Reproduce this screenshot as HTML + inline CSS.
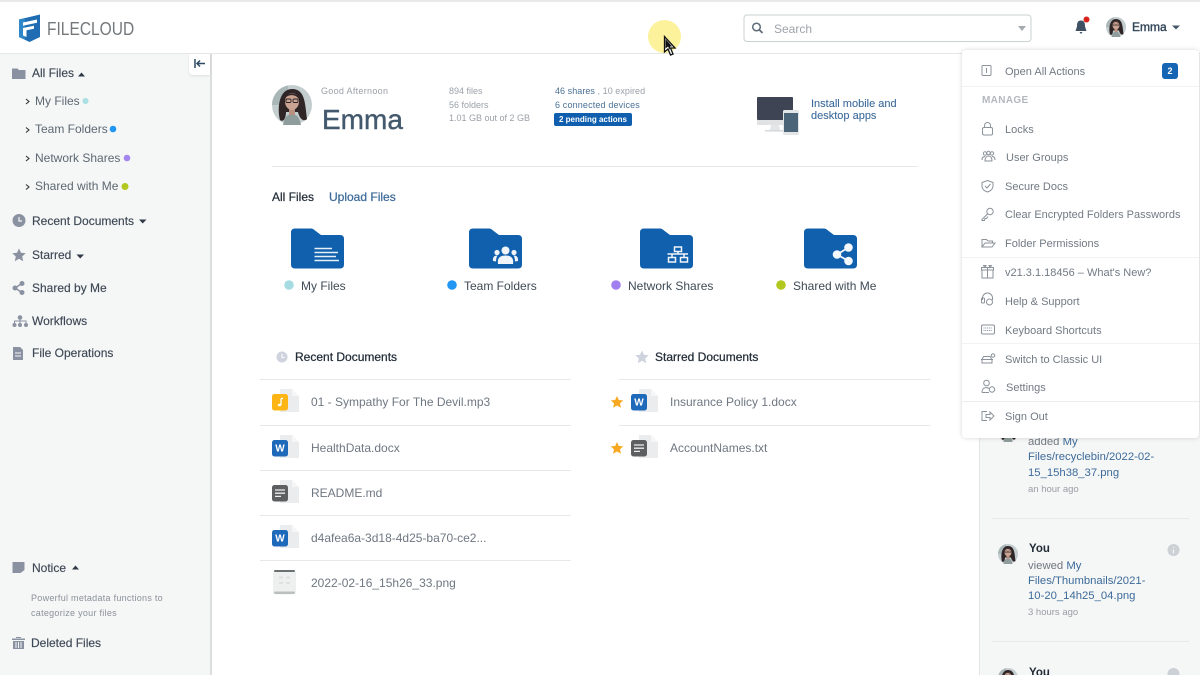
<!DOCTYPE html>
<html><head><meta charset="utf-8"><title>FileCloud</title>
<style>
html,body{margin:0;padding:0;width:1200px;height:675px;overflow:hidden;background:#fff}
body{position:relative;font-family:"Liberation Sans",sans-serif;filter:blur(.35px)}
.a{position:absolute}
.t{position:absolute;white-space:nowrap;line-height:16px;height:16px;font-size:12px}
.s{color:#3d4855;-webkit-text-stroke:.15px #3d4855}
.n{color:#5d6873}
.f{color:#6f7782}
.m{color:#727a84;font-size:11px}
.h{color:#232d38;-webkit-text-stroke:.25px #232d38}
.g{color:#9ba1a8;font-size:9px}
.b{color:#4b7095;font-size:9px;letter-spacing:.15px}
.l{color:#3d6b9a}
.c{color:#3f4b56}
.p{font-size:11.300px;color:#707881}
.hr{position:absolute;height:1px;background:#e6e8e9}
svg{position:absolute;left:0;top:0;overflow:visible}
</style></head><body>

<div class="a" style="left:0;top:0;width:1200px;height:2px;background:#e9e9e9"></div>
<div class="a" style="left:0;top:53px;width:1200px;height:1px;background:#e5e7e8"></div>
<div class="a" style="left:0;top:54px;width:210px;height:621px;background:#f5f6f6"></div>
<div class="a" style="left:210px;top:54px;width:1.5px;height:621px;background:#dcdedd"></div>
<div class="a" style="left:189px;top:54px;width:21px;height:21px;background:#fff;border-radius:0 0 0 4px;box-shadow:0 1px 2px rgba(0,0,0,.1)"></div>
<div class="a" style="left:979px;top:54px;width:221px;height:621px;background:#f5f6f6;border-left:1px solid #e3e5e5"></div>
<div class="hr" style="left:272px;top:166px;width:646px"></div>
<div class="hr" style="left:260px;top:379px;width:311px"></div>
<div class="hr" style="left:260px;top:425px;width:311px"></div>
<div class="hr" style="left:260px;top:470px;width:311px"></div>
<div class="hr" style="left:260px;top:515px;width:311px"></div>
<div class="hr" style="left:260px;top:560px;width:311px"></div>
<div class="hr" style="left:619px;top:379px;width:311px"></div>
<div class="hr" style="left:619px;top:425px;width:311px"></div>
<div class="hr" style="left:992px;top:518px;width:197px"></div>
<div class="hr" style="left:992px;top:641px;width:197px"></div>

<svg width="1200" height="675" viewBox="0 0 1200 675">
<defs>
<symbol id="folder" overflow="visible"><path d="M4 0H20Q22 0 24 2L30 6.500H49Q53 6.500 53 10.500V36Q53 40 49 40H4Q0 40 0 36V4Q0 0 4 0Z" fill="#1060ae"/></symbol>
<symbol id="av" overflow="visible" viewBox="-20 -20 40 40">
<circle r="20" fill="#c3cdce"/><path d="M-20 0A20 20 0 0 1-4-19.600L-4 0Z" fill="#aab7b8"/>
<path d="M-12 15C-15 3-13-16 0-16S13-2 15 14C11 18 7 12 6 7H-6C-6 12-8 18-12 15Z" fill="#2f2527"/>
<path d="M-9 20Q-7 9 0 9T9 20Z" fill="#8f9c9c"/>
<rect x="-3" y="3" width="6" height="7" fill="#b98f7f"/>
<ellipse cx="0" cy="-3.500" rx="7" ry="8.500" fill="#cba392"/>
<path d="M-7.500-5C-6-11 4-12 7.500-5 6-13-5-15-7.500-5Z" fill="#2f2527"/>
<rect x="-6" y="-6" width="5" height="3.500" rx="1" fill="none" stroke="#2a2325" stroke-width=".9"/>
<rect x="1" y="-6" width="5" height="3.500" rx="1" fill="none" stroke="#2a2325" stroke-width=".9"/>
</symbol>
<symbol id="doc" overflow="visible"><path d="M0 0H12L19 7V23H0Z" fill="#ebeced"/><path d="M12 0L19 7H12Z" fill="#f6f6f6"/></symbol>
<symbol id="word" overflow="visible"><use href="#doc" x="8" y="-5"/><rect width="16" height="16.500" rx="2.500" fill="#1f69bb"/><text x="8" y="11.500" font-family="Liberation Sans" font-size="10" font-weight="700" fill="#fff" text-anchor="middle">W</text></symbol>
<symbol id="txt" overflow="visible"><use href="#doc" x="8" y="-5"/><rect width="16" height="16.500" rx="2.500" fill="#5e5f60"/><path d="M3 5H13M3 8.200H13M3 11.400H9" stroke="#eee" stroke-width="1.300"/></symbol>
<symbol id="star" overflow="visible" viewBox="-7 -7 14 14"><path d="M0-6.500L2-2.200 6.700-1.700 3.200 1.500 4.200 6.200 0 3.800-4.200 6.200-3.200 1.500-6.700-1.700-2-2.200Z"/></symbol>
</defs>

<!-- logo -->
<path d="M19 19.500L40 14.500V37L29.500 42 19 37Z" fill="#1f6cb3"/>
<path d="M19 19.500L25 18V39.500L19 37Z" fill="#2f86c8"/>
<path d="M23 22.500L37 19.500V22.800L23 25.800ZM23 28L34 25.700V28.700L26.500 30.300V37L23 35.500Z" fill="#fff"/>

<!-- collapse -->
<path d="M195 59V68M205 63.500H197.500M200 60.500L197 63.500 200 66.500" fill="none" stroke="#2e4a63" stroke-width="1.500"/>
<!-- sidebar icons -->
<g fill="#8a91a1">
<path d="M12 68.500H17.500L19 70H25.500V79H12Z"/>
<circle cx="19" cy="220.500" r="6.500"/>
<use href="#star" x="12" y="248" width="14" height="14"/>
<circle cx="15" cy="288" r="2.500"/><circle cx="22" cy="283.500" r="2.500"/><circle cx="22" cy="292.500" r="2.500"/>
<path d="M15 288L22 283.500M15 288L22 292.500" stroke="#8a91a1" stroke-width="1.500"/>
<circle cx="20" cy="317.500" r="2.300"/><circle cx="14.500" cy="325" r="2"/><circle cx="20" cy="325" r="2"/><circle cx="26" cy="325" r="2"/>
<path d="M20 318V323M14.500 323V321H26V323" fill="none" stroke="#8a91a1"/>
<path d="M13 347H20L23 350V360H13Z"/>
<path d="M12.500 562H24.500V570L20.500 573H12.500Z"/>
<path d="M12 638.500H25V640H12ZM16 637H21V638H16ZM13 641H24V649H13Z"/>
</g>
<path d="M19 217V221H22" stroke="#f5f6f6" fill="none" stroke-width="1.200"/>
<path d="M15 353H21M15 356H21" stroke="#f5f6f6"/>
<path d="M16 642V648M18.500 642V648M21 642V648" stroke="#f5f6f6"/>
<g fill="#2f3a46">
<path d="M78 76.500L81.500 72.500 85 76.500Z"/>
<path d="M139 219.500H146.500L142.700 223.500Z"/>
<path d="M76.500 254.500H84L80.200 258.500Z"/>
<path d="M72 569.500L75.500 565.500 79 569.500Z"/>
</g>
<g fill="none" stroke="#333" stroke-width="1.100">
<path d="M26 99L29 101.500 26 104"/><path d="M26 127.500L29 130 26 132.500"/><path d="M26 156L29 158.500 26 161"/><path d="M26 184.500L29 187 26 189.500"/>
</g>
<circle cx="85.500" cy="101" r="3" fill="#a8e0e4"/><circle cx="113" cy="129" r="3.300" fill="#2196f3"/><circle cx="127" cy="158" r="3.300" fill="#a487ee"/><circle cx="125" cy="186.500" r="3.500" fill="#b2c81e"/>

<!-- header right -->
<circle cx="664.500" cy="36.500" r="16.500" fill="#fcf29b"/>
<rect x="744" y="15" width="287" height="26.500" rx="3" fill="#fff" stroke="#cbd0d2"/>
<circle cx="756.500" cy="27" r="3.800" fill="none" stroke="#5d6b79" stroke-width="1.500"/><path d="M759.500 30L762.500 33" stroke="#5d6b79" stroke-width="1.700"/>
<path d="M1018 26H1026L1022 31Z" fill="#a6abb0"/>
<path d="M1081 20.500C1077.500 20.500 1077 23 1077 26.500L1075.500 31H1086.500L1085 26.500C1085 23 1084.500 20.500 1081 20.500ZM1079.500 32H1082.500L1081 34Z" fill="#3f5163"/>
<circle cx="1086.500" cy="19.500" r="3" fill="#d9221c"/>
<use href="#av" x="1106" y="17" width="20" height="20"/>
<path d="M1172 25.500H1180L1176 29.500Z" fill="#44586b"/>

<!-- cursor -->
<path d="M664.500 36.500V52L668 49 670.500 55 673 54 670.500 48H675Z" fill="#fff" stroke="#111" stroke-width="1.300"/>
<path d="M665.500 39V48.500L668 46.500 670 50 670 46.500H672Z" fill="#111"/>

<!-- greeting -->
<use href="#av" x="272" y="85" width="40" height="40"/>
<!-- devices -->
<rect x="757" y="97" width="36" height="23" rx="1" fill="#3e4453"/>
<rect x="757" y="120" width="36" height="5" fill="#e0e2e3"/>
<path d="M771 125H779L780 130H770Z" fill="#e4e5e6"/>
<rect x="765" y="130" width="20" height="1.500" fill="#d5d7d8"/>
<rect x="783" y="110" width="16" height="25" rx="1.500" fill="#e3e6e7"/>
<rect x="784" y="113" width="14" height="19" fill="#4b6477"/>

<!-- folders -->
<use href="#folder" x="291" y="228.500"/><use href="#folder" x="469" y="228.500"/><use href="#folder" x="640" y="228.500"/><use href="#folder" x="804" y="228.500"/>
<path d="M314.500 248.500H332M314.500 252.500H338M314.500 256.500H336M314.500 260.500H339" stroke="#e7f0f8" stroke-width="1.600"/>
<g fill="#f1f5fa">
<circle cx="505.500" cy="250.500" r="4"/><path d="M498 264C497 258 500 255.500 505.500 255.500S514 258 513 264Z"/>
<circle cx="497" cy="252.500" r="2.600"/><path d="M493 261C492.500 257 494.500 255.500 497.500 255.500 496.500 257 496 259 496 261.500Z"/>
<circle cx="514" cy="252.500" r="2.600"/><path d="M518 261C518.500 257 516.500 255.500 513.500 255.500 514.500 257 515 259 515 261.500Z"/>
</g>
<g fill="none" stroke="#f1f5fa" stroke-width="1.500">
<rect x="674.500" y="247" width="7" height="4.500"/><rect x="668.500" y="257.500" width="7" height="4.500"/><rect x="680.500" y="257.500" width="7" height="4.500"/>
<path d="M667.500 254H688M678 251.500V254M672 254V257.500M684 254V257.500"/>
</g>
<g fill="#f4f7fb"><circle cx="848.500" cy="247.500" r="4.300"/><circle cx="837" cy="254.500" r="4.300"/><circle cx="848.500" cy="261" r="4.300"/></g>
<path d="M837 254.500L848.500 247.500M837 254.500L848.500 261" stroke="#f4f7fb" stroke-width="1.800"/>
<circle cx="289" cy="285" r="4.800" fill="#a6dbe1"/><circle cx="452" cy="285" r="4.800" fill="#2196f3"/><circle cx="616" cy="285" r="4.800" fill="#a17ff0"/><circle cx="781" cy="285" r="4.800" fill="#b2c81e"/>

<!-- sections -->
<circle cx="282" cy="357" r="5.500" fill="#cfd3dd"/><path d="M282 354V357.500H284.500" stroke="#fff" fill="none"/>
<use href="#star" x="635" y="350" width="14" height="14" fill="#cfd3dd"/>

<!-- file icons -->
<use href="#doc" x="280" y="389"/><rect x="272" y="394" width="16" height="16.500" rx="2.500" fill="#fdb515"/><path d="M281 398.500V405" stroke="#fff" stroke-width="1.300"/><path d="M281 398.500H283" stroke="#fff" stroke-width="1.300"/><ellipse cx="279.500" cy="405" rx="1.700" ry="1.300" fill="#fff"/>
<use href="#word" x="272" y="440"/>
<use href="#txt" x="272" y="485"/>
<use href="#word" x="272" y="530"/>
<rect x="273" y="570" width="23" height="24.500" rx="3" fill="#eeefef"/><rect x="274" y="570" width="21" height="2" rx="1" fill="#6b7072"/><rect x="274" y="591.500" width="21" height="2.500" rx="1.200" fill="#bcbfc0"/><path d="M279 577.500H283M286 577.500H290M279 583H283M286 583H290" stroke="#dfe0e1" stroke-width="2"/>
<use href="#word" x="631" y="394"/>
<use href="#txt" x="631" y="440"/>
<use href="#star" x="610.500" y="395.500" width="13" height="13" fill="#f8a821"/>
<use href="#star" x="610.500" y="441.500" width="13" height="13" fill="#f8a821"/>

<!-- activity -->
<use href="#av" x="998" y="422" width="20" height="20"/>
<use href="#av" x="998" y="544" width="20" height="20"/>
<use href="#av" x="998" y="668" width="20" height="20"/>
<circle cx="1173.500" cy="550" r="6" fill="#ccd1d6"/><path d="M1173.500 547V548M1173.500 549.500V553.500" stroke="#f5f6f6" stroke-width="1.300"/>
<circle cx="1173.500" cy="674" r="6" fill="#ccd1d6"/>
</svg>

<!-- header text -->
<div class="t" style="left:47px;top:19px;font-size:18.500px;line-height:19px;height:19px;color:#74787b;transform:scaleX(.84);transform-origin:left center">FILECLOUD</div>
<div class="t" style="left:774px;top:21px;color:#9ea4aa">Search</div>
<div class="t" style="left:1132px;top:19px;color:#33475a;-webkit-text-stroke:.4px #33475a">Emma</div>

<!-- sidebar text -->
<div class="t s" style="left:32px;top:65px">All Files</div>
<div class="t n" style="left:35px;top:93px">My Files</div>
<div class="t n" style="left:35px;top:121px">Team Folders</div>
<div class="t n" style="left:35px;top:150px">Network Shares</div>
<div class="t n" style="left:35px;top:178px">Shared with Me</div>
<div class="t s" style="left:32px;top:213px">Recent Documents</div>
<div class="t s" style="left:32px;top:247px">Starred</div>
<div class="t s" style="left:32px;top:280px">Shared by Me</div>
<div class="t s" style="left:32px;top:313px">Workflows</div>
<div class="t s" style="left:32px;top:345px">File Operations</div>
<div class="t s" style="left:32px;top:560px">Notice</div>
<div class="t" style="left:31px;top:590px;font-size:9px;letter-spacing:.28px;color:#8a919a">Powerful metadata functions to</div>
<div class="t" style="left:31px;top:605px;font-size:9px;letter-spacing:.28px;color:#8a919a">categorize your files</div>
<div class="t s" style="left:31px;top:635px">Deleted Files</div>

<!-- greeting text -->
<div class="t g" style="left:321px;top:83px;letter-spacing:.3px">Good Afternoon</div>
<div class="t" style="left:322px;top:103px;font-size:28px;line-height:34px;height:34px;color:#43596d;-webkit-text-stroke:.4px #43596d">Emma</div>
<div class="t g" style="left:449px;top:83px">894 files</div>
<div class="t g" style="left:449px;top:97px">56 folders</div>
<div class="t g" style="left:449px;top:110px">1.01 GB out of 2 GB</div>
<div class="t b" style="left:555px;top:83px;letter-spacing:.05px">46 shares <span style="color:#9ba1a8">, 10 expired</span></div>
<div class="t b" style="left:555px;top:97px">6 connected devices</div>
<div class="a" style="left:554px;top:113px;width:78px;height:13px;border-radius:2px;background:#0f5fae;color:#fff;font-size:8px;font-weight:700;line-height:13px;text-align:center">2 pending actions</div>
<div class="t" style="left:811px;top:96px;font-size:11px;color:#3d6b9a;-webkit-text-stroke:.1px #3d6b9a">Install mobile and</div>
<div class="t" style="left:811px;top:108px;font-size:11px;color:#3d6b9a;-webkit-text-stroke:.1px #3d6b9a">desktop apps</div>
<div class="t h" style="left:272px;top:189px;color:#27313c">All Files</div>
<div class="t l" style="left:329px;top:189px;-webkit-text-stroke:.25px #3d6b9a">Upload Files</div>

<div class="t c" style="left:301px;top:278px">My Files</div>
<div class="t c" style="left:464px;top:278px">Team Folders</div>
<div class="t c" style="left:628px;top:278px">Network Shares</div>
<div class="t c" style="left:793px;top:278px">Shared with Me</div>

<div class="t h" style="left:295px;top:349px">Recent Documents</div>
<div class="t h" style="left:655px;top:349px">Starred Documents</div>
<div class="t f" style="left:311px;top:394px">01 - Sympathy For The Devil.mp3</div>
<div class="t f" style="left:311px;top:440px">HealthData.docx</div>
<div class="t f" style="left:311px;top:485px">README.md</div>
<div class="t f" style="left:311px;top:530px">d4afea6a-3d18-4d25-ba70-ce2...</div>
<div class="t f" style="left:311px;top:575px">2022-02-16_15h26_33.png</div>
<div class="t f" style="left:670px;top:394px">Insurance Policy 1.docx</div>
<div class="t f" style="left:670px;top:440px">AccountNames.txt</div>

<!-- activity text -->
<div class="t p" style="left:1028px;top:434px">added <span style="color:#3d6b9a">My</span></div>
<div class="t p" style="left:1028px;top:449px;color:#3d6b9a">Files/recyclebin/2022-02-</div>
<div class="t p" style="left:1028px;top:465px;color:#3d6b9a">15_15h38_37.png</div>
<div class="t" style="left:1028px;top:482px;font-size:9.500px;color:#989ea5">an hour ago</div>
<div class="t" style="left:1029px;top:541px;font-size:11.500px;color:#232d38;font-weight:700">You</div>
<div class="t p" style="left:1028px;top:558px">viewed <span style="color:#3d6b9a">My</span></div>
<div class="t p" style="left:1028px;top:573px;color:#3d6b9a">Files/Thumbnails/2021-</div>
<div class="t p" style="left:1028px;top:588px;color:#3d6b9a">10-20_14h25_04.png</div>
<div class="t" style="left:1028px;top:605px;font-size:9.500px;color:#989ea5">3 hours ago</div>
<div class="t" style="left:1029px;top:665px;font-size:11.500px;color:#232d38;font-weight:700">You</div>

<!-- dropdown menu -->
<div class="a" style="left:962px;top:50px;width:237px;height:388px;background:#fff;border-radius:4px;box-shadow:0 0 5px rgba(0,0,0,.17)"></div>
<div class="hr" style="left:962px;top:86px;width:237px;background:#f1f2f3"></div>
<div class="hr" style="left:962px;top:257px;width:237px;background:#f1f2f3"></div>
<div class="hr" style="left:962px;top:343px;width:237px;background:#f1f2f3"></div>
<div class="hr" style="left:962px;top:401px;width:237px;background:#eceded"></div>
<svg width="1200" height="675" viewBox="0 0 1200 675">
<g fill="none" stroke="#8b929a" stroke-width="1">
<rect x="982" y="65.500" width="9" height="10" rx="1"/><path d="M986.500 68V73"/>
<rect x="982.500" y="127.500" width="10" height="7.500" rx="1.500"/><path d="M984.500 127.500V125.500A3 3 0 0 1 990.500 125.500V127.500"/>
<circle cx="985" cy="153.500" r="1.700"/><circle cx="988.500" cy="153" r="1.700"/><circle cx="992" cy="153.500" r="1.700"/><path d="M982 160C982 157 983.500 156.500 985 156.500M995 160C995 157 993.500 156.500 992 156.500M985 161C985 157 987 156 988.500 156S992 157 992 161Z"/>
<path d="M987.500 180.500L993 182.500V186C993 189 990.500 191 987.500 192 984.500 191 982 189 982 186V182.500Z"/><path d="M985 186L987 188 990.500 184"/>
<circle cx="990" cy="211.500" r="3.200"/><path d="M987.500 214L982 219.500V220.500H984.500L985 218.500H986.500L988 216.500"/>
<path d="M982 246.500V239.500H986.500L988 241H992.500V243M982 247H992L995 243H985Z"/>
<rect x="982" y="270" width="11" height="8"/><path d="M981.500 270H993.500V267.500H981.500ZM987.500 267.500V278M985 267.500L983.500 265.500H986ZM990 267.500L991.500 265.500H989Z"/>
<path d="M982.500 300V298A5 5 0 0 1 992.500 298V300"/><rect x="981.500" y="298" width="3" height="5" rx="1"/><circle cx="989.500" cy="302" r="3"/>
<rect x="981.500" y="325" width="13" height="9" rx="1.500"/><path d="M983.500 328H992.500M983.500 330.500H992.500" stroke-dasharray="1 .8"/>
<path d="M982 363V359.500L983.500 356.500H990L992 359.500V363ZM981 359.500H993"/><circle cx="993" cy="355.500" r="1.700"/>
<circle cx="986.500" cy="383" r="2.800"/><path d="M982 392.500C982 388.500 984 387.500 987 387.500L989 388.500M982 392.500H989"/><circle cx="992" cy="389.500" r="2.700"/>
<path d="M987 411.500H982V420.500H987"/><path d="M986 414.500H990V412L994 416 990 420V417.500H986Z"/>
</g>
</svg>
<div class="a" style="left:1162px;top:63px;width:16px;height:16px;border-radius:3px;background:#1565b5;color:#fff;font-size:9px;font-weight:700;line-height:16px;text-align:center">2</div>
<div class="t m" style="left:1005px;top:64px">Open All Actions</div>
<div class="t" style="left:982px;top:93px;font-size:10px;font-weight:700;color:#b3b8bd;letter-spacing:.35px">MANAGE</div>
<div class="t m" style="left:1005px;top:122px">Locks</div>
<div class="t m" style="left:1006px;top:150px">User Groups</div>
<div class="t m" style="left:1005px;top:179px">Secure Docs</div>
<div class="t m" style="left:1005px;top:207px">Clear Encrypted Folders Passwords</div>
<div class="t m" style="left:1005px;top:236px">Folder Permissions</div>
<div class="t m" style="left:1005px;top:265px">v21.3.1.18456 – What's New?</div>
<div class="t m" style="left:1005px;top:294px">Help &amp; Support</div>
<div class="t m" style="left:1005px;top:323px">Keyboard Shortcuts</div>
<div class="t m" style="left:1005px;top:352px">Switch to Classic UI</div>
<div class="t m" style="left:1006px;top:380px">Settings</div>
<div class="t m" style="left:1005px;top:409px">Sign Out</div>

</body></html>
